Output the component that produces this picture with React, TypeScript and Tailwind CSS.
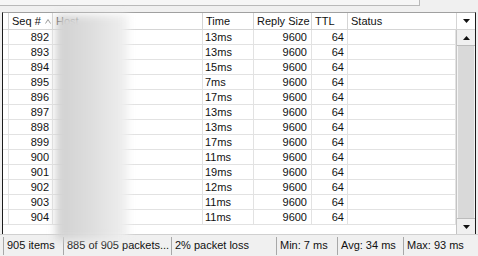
import React from "react";

const rows = [
  { seq: 892, time: "13ms" },
  { seq: 893, time: "13ms" },
  { seq: 894, time: "15ms" },
  { seq: 895, time: "7ms" },
  { seq: 896, time: "17ms" },
  { seq: 897, time: "13ms" },
  { seq: 898, time: "13ms" },
  { seq: 899, time: "17ms" },
  { seq: 900, time: "11ms" },
  { seq: 901, time: "19ms" },
  { seq: 902, time: "12ms" },
  { seq: 903, time: "11ms" },
  { seq: 904, time: "11ms" },
];

function Tri({ up }: { up?: boolean }) {
  return (
    <svg width="7" height="4" viewBox="0 0 7 4">
      <path d={up ? "M0 4 L3.5 0 L7 4 Z" : "M0 0 L7 0 L3.5 4 Z"} fill="#111" />
    </svg>
  );
}

export default function App() {
  const cell = "border-r border-[#e2e2e2] h-full flex items-center";
  return (
    <div
      className="relative w-[478px] h-[256px] overflow-hidden bg-[#f0f0f0] text-[11px] text-[#111]"
      style={{ fontFamily: '"Liberation Sans", Arial, sans-serif' }}
    >
      {/* top strip */}
      <div className="h-[12px]">
        <div className="w-[420px] h-[6px] bg-[#f6f6f6] border-b border-r border-[#b9b9b9]" />
      </div>

      {/* list */}
      <div className="ml-[2px] mr-[2px] h-[222px] flex border-l border-r border-[#1c1c1c] border-t border-t-[#a0a0a0] bg-white">
        <div className="w-[453px] flex flex-col">
          {/* header */}
          <div className="h-[17px] flex border-b border-[#d5d5d5] bg-white">
            <div className="w-[6px] border-r border-[#d5d5d5]" />
            <div className="w-[44px] border-r border-[#d5d5d5] flex items-center pl-[3px] gap-[4px]">
              <span>Seq #</span>
              <svg width="6" height="5" viewBox="0 0 6 5">
                <path d="M0.5 4.5 L3 0.5 L5.5 4.5" stroke="#9a9a9a" fill="none" />
              </svg>
            </div>
            <div className="w-[150px] border-r border-[#d5d5d5] flex items-center pl-[3px]">Host</div>
            <div className="w-[51px] border-r border-[#d5d5d5] flex items-center pl-[3px]">Time</div>
            <div className="w-[58px] border-r border-[#d5d5d5] flex items-center pl-[3px]">Reply Size</div>
            <div className="w-[36px] border-r border-[#d5d5d5] flex items-center pl-[3px]">TTL</div>
            <div className="flex-1 flex items-center pl-[3px]">Status</div>
          </div>
          {/* rows */}
          <div className="flex flex-col">
            {rows.map((r) => (
              <div key={r.seq} className="h-[15px] flex border-b border-[#e2e2e2]">
                <div className={`w-[6px] ${cell}`} />
                <div className={`w-[44px] ${cell} justify-end pr-[3px]`}>{r.seq}</div>
                <div className={`w-[150px] ${cell}`} />
                <div className={`w-[51px] ${cell} pl-[2px]`}>{r.time}</div>
                <div className={`w-[58px] ${cell} justify-end pr-[4px]`}>9600</div>
                <div className={`w-[36px] ${cell} justify-end pr-[3px]`}>64</div>
                <div className={`flex-1 ${cell}`} />
              </div>
            ))}
          </div>
        </div>

        {/* dropdown + scrollbar */}
        <div className="flex-1 flex flex-col">
          <div className="h-[17px] flex items-center justify-center border-b border-l border-[#d5d5d5] bg-white">
            <Tri />
          </div>
          <div className="flex-1 flex flex-col bg-[#d6d6d6] border-l border-[#c4c4c4]">
            <div className="h-[16px] flex items-center justify-center bg-[#f0f0f0] border-b border-[#bcbcbc]">
              <Tri up />
            </div>
            <div className="flex-1 bg-[#d9d9d9] border-x border-[#f4f4f4]" />
            <div className="h-[16px] flex items-center justify-center bg-[#f0f0f0] border-t border-[#bcbcbc]">
              <Tri />
            </div>
          </div>
        </div>
      </div>

      {/* status bar */}
      <div className="h-[22px] flex items-center pl-[3px] bg-[#f0f0f0] border-t border-[#d0d0d0]">
        <div className="w-[58px] h-[18px] flex items-center pl-[3px] border-l border-[#a8a8a8]">905 items</div>
        <div className="w-[106px] h-[18px] flex items-center pl-[3px] ml-[2px] border-l border-[#a8a8a8] whitespace-nowrap">885 of 905 packets...</div>
        <div className="w-[103px] h-[18px] flex items-center pl-[3px] ml-[2px] border-l border-[#a8a8a8] whitespace-nowrap">2% packet loss</div>
        <div className="w-[59px] h-[18px] flex items-center pl-[3px] ml-[2px] border-l border-[#a8a8a8] whitespace-nowrap">Min: 7 ms</div>
        <div className="w-[64px] h-[18px] flex items-center pl-[3px] ml-[2px] border-l border-[#a8a8a8] whitespace-nowrap">Avg: 34 ms</div>
        <div className="w-[72px] h-[18px] flex items-center pl-[3px] ml-[2px] border-l border-[#a8a8a8] whitespace-nowrap">Max: 93 ms</div>
      </div>

      {/* blurred host overlay */}
      <div className="absolute left-[56px] top-[15px] w-[72px] h-[225px] bg-gradient-to-r from-[#d0d0d0] via-[#dedede] to-[#f0f0f0] blur-[4px]" />
    </div>
  );
}
